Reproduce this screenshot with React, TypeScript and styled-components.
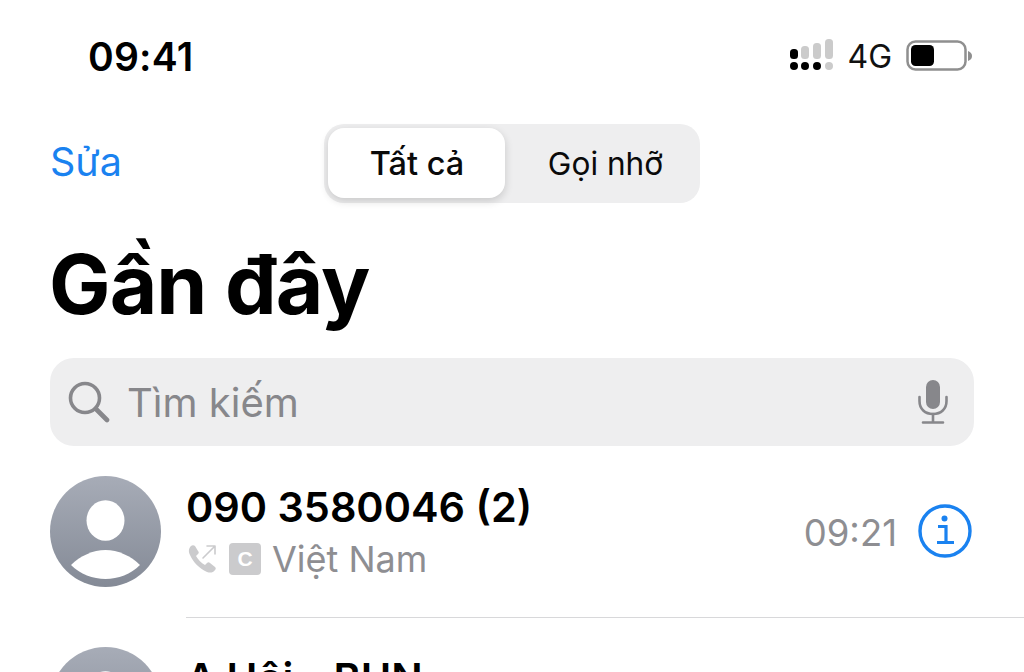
import React from "react";
import styled, { createGlobalStyle } from "styled-components";

const Global = createGlobalStyle`
  html, body { margin: 0; padding: 0; background: #fff; }
  body { font-family: Inter, "Liberation Sans", sans-serif; overflow: hidden; }
`;

const Screen = styled.div`
  width: 1024px;
  height: 672px;
  overflow: hidden;
  background: #fff;
  display: flex;
  flex-direction: column;
`;

const StatusBar = styled.div`
  height: 114px;
  flex: none;
  display: flex;
  align-items: flex-start;
  justify-content: space-between;
  padding: 33px 52px 0 88px;
  box-sizing: border-box;
`;

const Clock = styled.div`
  font-size: 39px;
  font-weight: 600;
  line-height: 48px;
  color: #000;
  letter-spacing: 0.2px;
`;

const StatusRight = styled.div`
  display: flex;
  align-items: center;
  gap: 14px;
  height: 48px;
  margin-top: -1px;
`;

const Network = styled.span`
  font-size: 32px;
  font-weight: 400;
  color: #111;
`;

const NavRow = styled.div`
  flex: none;
  height: 79px;
  margin-top: 10px;
  padding: 0 50px;
  display: grid;
  grid-template-columns: 1fr 376px 1fr;
  align-items: center;
`;

const EditLink = styled.span`
  font-size: 39.5px;
  line-height: 44px;
  padding-bottom: 3px;
  color: #1a82f0;
  font-weight: 400;
`;

const Segmented = styled.div`
  width: 376px;
  height: 79px;
  box-sizing: border-box;
  padding: 4px;
  border-radius: 20px;
  background: #eeeeef;
  display: flex;
`;

const Segment = styled.div<{ $active?: boolean }>`
  width: ${(p) => (p.$active ? "177px" : "auto")};
  flex: ${(p) => (p.$active ? "none" : "1")};
  height: 70px;
  box-sizing: border-box;
  padding-left: ${(p) => (p.$active ? "1px" : "10px")};
  border-radius: 16px;
  display: flex;
  align-items: center;
  justify-content: center;
  font-size: ${(p) => (p.$active ? "32.5px" : "31.6px")};
  font-weight: ${(p) => (p.$active ? 500 : 400)};
  color: #0a0a0a;
  background: ${(p) => (p.$active ? "#fff" : "transparent")};
  box-shadow: ${(p) => (p.$active ? "0 3px 8px rgba(0,0,0,.16)" : "none")};
`;

const Title = styled.h1`
  margin: 32px 0 0 49px;
  font-size: 82px;
  line-height: 100px;
  font-weight: 700;
  color: #000;
  letter-spacing: -0.9px;
`;

const SearchBar = styled.div`
  flex: none;
  margin: 23px 50px 0;
  height: 88px;
  border-radius: 24px;
  background: #eeeeef;
  display: flex;
  align-items: center;
  padding: 0 26px 0 18px;
  gap: 17px;
  color: #87878b;
`;

const SearchText = styled.span`
  flex: 1;
  font-size: 40px;
  font-weight: 400;
  color: #87878b;
`;

const Row = styled.div`
  flex: none;
  display: flex;
  height: 171px;
  margin-left: 50px;
  padding-top: 30px;
  box-sizing: border-box;
  gap: 25px;
`;

const Avatar = styled.svg`
  flex: none;
  width: 111px;
  height: 111px;
`;

const RowBody = styled.div`
  flex: 1;
  height: 142px;
  box-sizing: border-box;
  border-bottom: 1.5px solid #d8d8da;
  display: flex;
  padding-right: 52px;
`;

const RowText = styled.div`
  flex: 1;
  min-width: 0;
  padding-top: 6px;
`;

const Name = styled.div`
  font-size: 41.4px;
  font-weight: 600;
  line-height: 50px;
  color: #000;
  white-space: nowrap;
`;

const Sub = styled.div`
  display: flex;
  align-items: center;
  gap: 11px;
  margin-top: 2px;
  padding-left: 2px;
  color: #8e8e92;
  font-size: 36px;
  line-height: 50px;
`;

const Carrier = styled.span`
  width: 32px;
  height: 32px;
  border-radius: 4px;
  background: #cbcbcd;
  color: #fff;
  font-size: 21px;
  font-weight: 700;
  display: flex;
  align-items: center;
  justify-content: center;
  font-family: "Liberation Sans", sans-serif;
`;

const RowMeta = styled.div`
  display: flex;
  align-items: center;
  gap: 21px;
  height: 110px;
`;

const Time = styled.span`
  font-size: 36.5px;
  padding-top: 3px;
  color: #8e8e92;
`;

const AvatarIcon = () => (
  <Avatar viewBox="0 0 111 111">
    <defs>
      <linearGradient id="av" x1="0" y1="0" x2="0" y2="1">
        <stop offset="0" stopColor="#a7acb7" />
        <stop offset="1" stopColor="#848a96" />
      </linearGradient>
    </defs>
    <circle cx="55.5" cy="55.5" r="55.5" fill="url(#av)" />
    <ellipse cx="55.5" cy="44.5" rx="19" ry="20.3" fill="#fff" />
    <path d="M21 89 C30 80 43 74 55.5 74 C68 74 81 80 90 89 C81 98 68 103 55.5 103 C43 103 30 98 21 89 Z" fill="#fff" />
  </Avatar>
);

export default function App() {
  return (
    <Screen>
      <Global />
      <StatusBar>
        <Clock>09:41</Clock>
        <StatusRight>
          <svg width="44" height="34" viewBox="0 0 44 34">
            <g fill="#000">
              <rect x="1" y="10" width="8" height="10" rx="3.5" />
              <circle cx="5" cy="27" r="4" />
              <circle cx="16" cy="27" r="4" />
              <circle cx="28" cy="27" r="4" />
            </g>
            <g fill="#cbcbcb">
              <rect x="12" y="7" width="8" height="13" rx="3.5" />
              <rect x="24" y="4" width="8" height="16" rx="3.5" />
              <rect x="36" y="0" width="8" height="20" rx="3.5" />
              <circle cx="40" cy="27" r="4" />
            </g>
          </svg>
          <Network>4G</Network>
          <svg width="66" height="32" viewBox="0 0 66 32">
            <rect x="1.5" y="1.5" width="58" height="28" rx="8" fill="#fff" stroke="#8f8f8f" strokeWidth="2.5" />
            <rect x="5" y="5" width="23" height="21" rx="4.5" fill="#000" />
            <path d="M62 11 C65 12 66 14 66 16 C66 18 65 20 62 21 Z" fill="#8f8f8f" />
          </svg>
        </StatusRight>
      </StatusBar>

      <NavRow>
        <EditLink>Sửa</EditLink>
        <Segmented>
          <Segment $active>Tất cả</Segment>
          <Segment>Gọi nhỡ</Segment>
        </Segmented>
      </NavRow>

      <Title>Gần đây</Title>

      <SearchBar>
        <svg width="42" height="42" viewBox="0 0 42 42" fill="none" stroke="#87878b" strokeWidth="3.6" strokeLinecap="round">
          <circle cx="17" cy="17" r="14.5" />
          <path d="M28 28 L39 39" strokeWidth="4.6" />
        </svg>
        <SearchText>Tìm kiếm</SearchText>
        <svg width="30" height="44" viewBox="0 0 30 44" fill="none" stroke="#87878b" strokeWidth="2.6" strokeLinecap="round">
          <rect x="8" y="0" width="14" height="29" rx="7" fill="#87878b" stroke="none" />
          <path d="M1.5 17 V21 C1.5 29 7 34 15 34 C23 34 28.5 29 28.5 21 V17" />
          <path d="M15 34 V42 M5 42.5 H25" />
        </svg>
      </SearchBar>

      <Row>
        <AvatarIcon />
        <RowBody>
          <RowText>
            <Name>090 3580046 (2)</Name>
            <Sub>
              <svg width="30" height="30" viewBox="0 0 30 30" fill="none">
                <path d="M3 2 C1 4 0 7 2 11 C5 18 11 24 19 28 C22 29 25 29 27 26 C28 25 28 24 27 23 L22 19 C21 18 20 18 19 19 L17 21 C13 19 10 15 8 12 L10 10 C11 9 11 8 10 7 L7 2 C6 1 4 1 3 2 Z" fill="#cbcbcd" />
                <path d="M15 14 L27 2 M19 2 H27 V10" stroke="#cbcbcd" strokeWidth="1.6" strokeLinecap="round" strokeLinejoin="round" />
              </svg>
              <Carrier>C</Carrier>
              <span>Việt Nam</span>
            </Sub>
          </RowText>
          <RowMeta>
            <Time>09:21</Time>
            <svg width="54" height="54" viewBox="0 0 54 54" fill="none">
              <circle cx="27" cy="27" r="25" stroke="#1a82f0" strokeWidth="3.4" />
              <circle cx="26.5" cy="14.5" r="3" fill="#1a82f0" />
              <path d="M20 22.5 H28 V38 M19 38.5 H36" stroke="#1a82f0" strokeWidth="3.2" />
            </svg>
          </RowMeta>
        </RowBody>
      </Row>

      <Row>
        <AvatarIcon />
        <RowBody>
          <RowText>
            <Name>A Hội - BUN</Name>
          </RowText>
        </RowBody>
      </Row>
    </Screen>
  );
}
